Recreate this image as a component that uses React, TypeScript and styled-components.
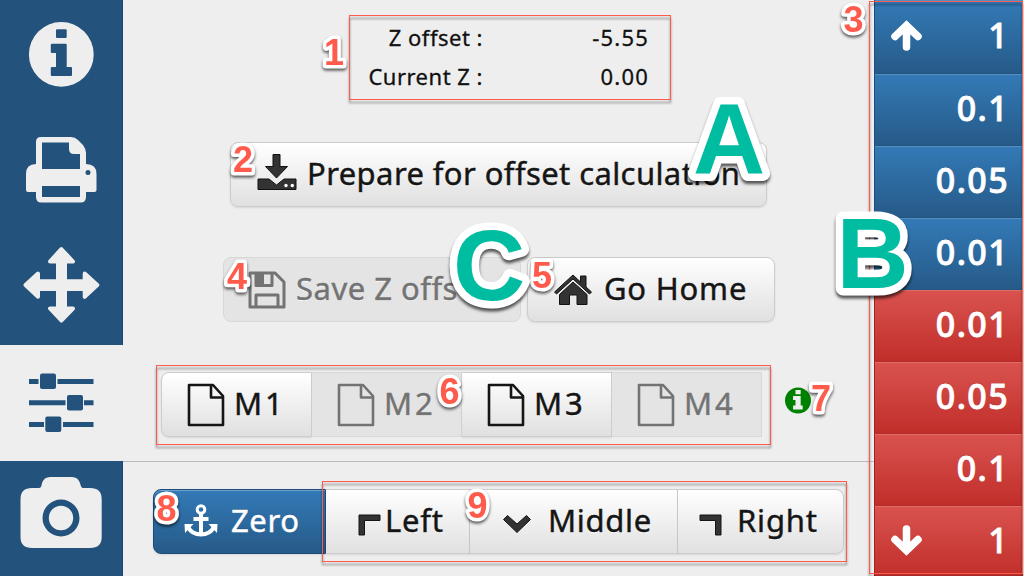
import React from 'react';
import styled, { createGlobalStyle, css } from 'styled-components';

const GlobalStyle = createGlobalStyle`
  * { box-sizing: border-box; }
  body { margin: 0; background: #eee; overflow: hidden; }
`;

const Screen = styled.div`
  position: relative;
  display: grid;
  grid-template-columns: 123px 751px 149px;
  width: 1024px;
  height: 576px;
  overflow: hidden;
  background: #eee;
  color: #111;
  font-family: 'Noto Sans', 'Open Sans', sans-serif;
`;

const Sidebar = styled.nav`
  display: grid;
  grid-template-rows: 115px 115px 115px 116px 115px;
`;

const SideItem = styled.div<{ $active?: boolean }>`
  background: ${p => (p.$active ? '#eee' : '#23527c')};
  color: ${p => (p.$active ? '#23527c' : '#eee')};
  border-right: 1px solid ${p => (p.$active ? '#eee' : '#174579')};
`;

const Icon = styled.svg<{ $shift?: number }>`
  display: block;
  flex: none;
  fill: currentColor;
  overflow: visible;
  margin-top: ${p => (p.$shift ?? 0) * 2}px;
`;

const Main = styled.main`
  display: flex;
  flex-direction: column;
`;

const Upper = styled.section`
  height: 462px;
  border-bottom: 1px solid #bbb;
  padding-top: 18px;
`;

const Readout = styled.dl`
  display: grid;
  grid-template-columns: 360px 166px;
  grid-auto-rows: 39px;
  margin: 0;
  line-height: 39px;
  font-size: 22px;
  text-align: right;
  -webkit-text-stroke: 0.3px currentColor;
`;

const Term = styled.dt<{ $spacing: number }>`
  letter-spacing: ${p => p.$spacing}px;
`;

const Value = styled.dd<{ $spacing: number }>`
  margin: 0;
  letter-spacing: ${p => p.$spacing}px;
`;

const ButtonRow = styled.div<{ $left: number; $top: number; $gap?: number }>`
  display: flex;
  gap: ${p => p.$gap ?? 0}px;
  margin: ${p => p.$top}px 0 0 ${p => p.$left}px;
`;

const Button = styled.button<{
  $width: number;
  $pad: number;
  $gap: number;
  $corners?: string;
  $joined?: boolean;
  $primary?: boolean;
}>`
  display: flex;
  align-items: center;
  gap: ${p => p.$gap}px;
  width: ${p => p.$width}px;
  height: 65px;
  padding: 0 0 0 ${p => p.$pad}px;
  border: 1px solid #ccc;
  border-left-width: ${p => (p.$joined ? 0 : 1)}px;
  border-radius: ${p => p.$corners ?? '8px'};
  background: linear-gradient(#fff, #e0e0e0);
  box-shadow: inset 0 1px 0 rgba(255, 255, 255, 0.3), 0 1px 2px rgba(0, 0, 0, 0.1);
  color: #151515;
  font: inherit;
  font-size: 31px;
  line-height: 61px;
  text-shadow: 0 1px 0 #fff;
  white-space: nowrap;
  ${p => p.$primary && css`
    background: linear-gradient(#337ab7, #265a88);
    border-color: #1c4c7c;
    color: #fff;
    text-shadow: 0 -1px 0 rgba(0, 0, 0, 0.2);
  `}
  &:disabled {
    background: #e4e4e4;
    border-color: #d8d8d8;
    box-shadow: none;
    color: #737373;
  }
`;

const Label = styled.span<{ $spacing: number }>`
  height: 63px;
  letter-spacing: ${p => p.$spacing}px;
  -webkit-text-stroke: 0.45px currentColor;
`;

const InfoMark = styled.span`
  margin: 15px 0 0 23px;
  color: #008000;
`;

const Steps = styled.aside`
  display: grid;
  grid-template-rows: 74px repeat(7, 72px);
`;

const Step = styled.button<{ $down?: boolean }>`
  display: flex;
  align-items: center;
  justify-content: space-between;
  padding: 0 14px 3px 16px;
  border: 0;
  border-left: 1px solid ${p => (p.$down ? '#a51f1c' : '#1c4c7c')};
  border-bottom: 1px solid ${p => (p.$down ? '#b92c28' : '#245580')};
  background: ${p => (p.$down ? 'linear-gradient(#d9534f, #c12e2a)' : 'linear-gradient(#337ab7, #265a88)')};
  box-shadow: inset 0 1px 0 rgba(255, 255, 255, 0.16);
  color: #fff;
  font: inherit;
  font-size: 34px;
  font-weight: 500;
  text-shadow: 0 -1px 0 rgba(0, 0, 0, 0.2);
`;

const StepText = styled.span`
  margin-left: auto;
  letter-spacing: 1.4px;
  -webkit-text-stroke: 0.8px currentColor;
`;

const Outline = styled.div<{ $x: number; $y: number; $w: number; $h: number }>`
  position: absolute;
  left: ${p => p.$x}px;
  top: ${p => p.$y}px;
  width: ${p => p.$w}px;
  height: ${p => p.$h}px;
  border: 1px solid #ff5b4c;
  filter: drop-shadow(0 3px 1px rgba(0, 0, 0, 0.5));
  pointer-events: none;
`;

const Callouts = styled.svg`
  position: absolute;
  inset: 0;
  pointer-events: none;
`;

const Callout = styled.text<{ $big?: boolean }>`
  fill: ${p => (p.$big ? '#00bca1' : '#ff5b4c')};
  font: bold ${p => (p.$big ? 100 : 36)}px/1 'Liberation Sans', sans-serif;
  stroke: #fff;
  stroke-width: ${p => (p.$big ? 15 : 7)}px;
  stroke-linejoin: round;
  paint-order: stroke fill;
  filter: drop-shadow(0 ${p => (p.$big ? 3 : 2.5)}px 1.5px rgba(0, 0, 0, 0.65));
`;

const InfoIcon = () => (
  <Icon width="122" height="115" viewBox="0 0 122 115">
    <path fillRule="evenodd" d="M61.3 22a32.4 32.4 0 1 0 0 64.8a32.4 32.4 0 0 0 0-64.8zM57 29.2h8.700a1 1 0 0 1 1 1V37a1 1 0 0 1-1 1H57a1 1 0 0 1-1-1v-6.800a1 1 0 0 1 1-1zM51.800 43.800h13.900a1 1 0 0 1 1 1V67h4.300a1 1 0 0 1 1 1v7a1 1 0 0 1-1 1H51.800a1 1 0 0 1-1-1v-7a1 1 0 0 1 1-1H56V53h-4.200a1 1 0 0 1-1-1v-7.200a1 1 0 0 1 1-1z" />
  </Icon>
);

const PrintIcon = () => (
  <Icon width="122" height="115" viewBox="0 115 122 115">
    <path fillRule="evenodd" d="M41 137H71Q75 137 78 140L83 145Q86 149 86 153V164Q96.500 164 96.500 174V190Q96.500 192 94.500 192H86V197Q86 202.500 80.500 202.500H41.500Q36 202.500 36 197V192H28Q26 192 26 190V174Q26 164 36 164V142Q36 137 41 137ZM42 142.500V169H80V154H74Q69 154 69 149V142.500ZM42 186V197H80V186ZM88 170a2.500 2.500 0 1 0 0 5a2.500 2.500 0 0 0 0-5z" />
  </Icon>
);

const MoveIcon = () => (
  <Icon width="122" height="115" viewBox="0 230 122 115">
    <path strokeLinejoin="round" stroke="currentColor" strokeWidth="4" d="M61.300 249L73 261.500H65V281.200H84.700V273.500L97.300 285L84.700 296.800V289H65V308.500H73L61.300 320.500L50 308.500H58V289H38V296.800L25.500 285L38 273.500V281.200H58V261.500H50Z" />
  </Icon>
);

const SlidersIcon = () => (
  <Icon width="122" height="115" viewBox="0 345 122 115">
    <path d="M29 379h9.500v5H29zM57.500 379h36v5h-36zM29 400.300h36.500v5H29zM84 400.300h9.500v5H84zM29 422h15v5H29zM63 422h30.500v5H63z" />
    <rect x="40" y="373.500" width="16" height="15.500" rx="2" />
    <rect x="67" y="395" width="16" height="15.500" rx="2" />
    <rect x="45.300" y="416.500" width="16" height="15.500" rx="2" />
  </Icon>
);

const CameraIcon = () => (
  <Icon width="122" height="115" viewBox="0 461 122 115">
    <path fillRule="evenodd" d="M32 488H39Q41.500 488 42 483Q44 477 50 477H72Q78 477 80 483Q81 488 83 488H90Q101.700 488 101.700 499V537Q101.700 548 90 548H32Q20.500 548 20.500 537V499Q20.500 488 32 488ZM61 499.500a18.500 18.500 0 1 0 0 37a18.500 18.500 0 0 0 0-37zM61 505.800a12.200 12.200 0 1 1 0 24.400a12.200 12.200 0 0 1 0-24.400z" />
  </Icon>
);

const DownloadIcon = () => (
  <Icon width="40" height="38" viewBox="0 0 40 38" color="#333" $shift={-3}>
    <path stroke="#111" strokeLinejoin="round" d="M16 1.500H23V13.500H30.500L19.500 25L8.500 13.500H16ZM1 26H12L19.500 32L27 26H39V36.500H1Z" />
    <circle cx="29" cy="32.500" r="1.700" fill="#fff" />
    <circle cx="35.300" cy="32.500" r="1.700" fill="#fff" />
  </Icon>
);

const FloppyIcon = () => (
  <Icon width="38" height="38" viewBox="0 0 38 38">
    <g fill="none" stroke="currentColor" strokeWidth="3" strokeLinejoin="round">
      <path d="M2 2H27L36 11V36H2Z" />
      <path d="M8 2V14.500H24V2M8 36V24H30V36" />
    </g>
    <path d="M8 2H16V14H8Z" />
  </Icon>
);

const HomeIcon = () => (
  <Icon width="38" height="32" viewBox="0 0 38 32" color="#333">
    <path stroke="#111" strokeWidth="1" d="M19 1L26.500 8V2H32V13L37.500 18L35.500 20L19 5L2.500 20L.5 18ZM19 8L33 20.500V30.500H23V21H15.500V30.500H5.500V20.500Z" />
  </Icon>
);

const FileIcon = () => (
  <Icon width="38" height="44" viewBox="0 0 38 44">
    <path fill="none" stroke="currentColor" strokeWidth="2.600" strokeLinejoin="round" d="M2 2H26L36 13V42H2ZM24 2V14.500H36" />
  </Icon>
);

const SmallInfoIcon = () => (
  <Icon width="26" height="27" viewBox="28.900 22 64.800 64.800">
    <path fillRule="evenodd" d="M61.300 22a32.400 32.400 0 1 0 0 64.800a32.400 32.400 0 0 0 0-64.800zM55 28h13v11H55zM49 43h19v24h5v10H49v-10h6V53h-6z" />
  </Icon>
);

const AnchorIcon = () => (
  <Icon width="34" height="34" viewBox="0 0 34 34" $shift={-1}>
    <circle cx="17" cy="5.500" r="3.800" fill="none" stroke="currentColor" strokeWidth="3" />
    <path d="M15 9h4v22h-4zM9.500 13h15v4h-15z" />
    <path fill="none" stroke="currentColor" strokeWidth="4" d="M4 23Q8 30.500 17 30.500Q26 30.500 30 23" />
    <path d="M.5 20H9.500L1 29ZM33.500 20H24.500L33 29Z" />
  </Icon>
);

const CornerIcon = ({ flip }: { flip?: boolean }) => (
  <Icon width="23" height="22" viewBox="0 0 23 22" color="#333" $shift={3}>
    <path stroke="#151515" d={flip ? 'M1 1H22V21H16.500V6.500H1Z' : 'M22 1H1V21H6.500V6.500H22Z'} />
  </Icon>
);

const ChevronIcon = () => (
  <Icon width="30" height="20" viewBox="0 0 30 20" color="#333" $shift={2}>
    <path stroke="#151515" strokeLinejoin="round" d="M5.500 1.500L15 10L24.500 1.500L28.500 5.500L15 18.500L1.500 5.500Z" />
  </Icon>
);

const ArrowIcon = ({ down }: { down?: boolean }) => (
  <Icon width="31" height="31" viewBox="0 0 31 31">
    <path
      transform={down ? 'rotate(180 15.5 15.5)' : undefined}
      fill="none"
      stroke="currentColor"
      strokeWidth="7.5"
      strokeLinecap="round"
      strokeLinejoin="miter"
      d="M15.500 27V6M4 16.500L15.500 5.500L27 16.500"
    />
  </Icon>
);

const memory = [
  { name: 'M1', enabled: true },
  { name: 'M2', enabled: false },
  { name: 'M3', enabled: true },
  { name: 'M4', enabled: false },
];

const steps = ['1', '0.1', '0.05', '0.01', '0.01', '0.05', '0.1', '1'];

const outlines = [
  [349, 15, 322, 85],
  [869, 1, 154, 573],
  [156, 365, 615, 80],
  [322, 481, 525, 81],
];

const callouts: [string, number, number][] = [
  ['1', 324, 65],
  ['2', 233, 172],
  ['3', 843.5, 32],
  ['4', 227, 288.5],
  ['5', 532, 287.5],
  ['6', 439.5, 404],
  ['7', 811, 411],
  ['8', 156.5, 521],
  ['9', 467.5, 518],
];

const letters: [string, number, number][] = [
  ['A', 693, 174],
  ['B', 836.5, 288],
  ['C', 453, 300],
];

export default function App() {
  return (
    <Screen>
      <GlobalStyle />
      <Sidebar>
        <SideItem><InfoIcon /></SideItem>
        <SideItem><PrintIcon /></SideItem>
        <SideItem><MoveIcon /></SideItem>
        <SideItem $active><SlidersIcon /></SideItem>
        <SideItem><CameraIcon /></SideItem>
      </Sidebar>
      <Main>
        <Upper>
          <Readout>
            <Term $spacing={0.5}>Z offset :</Term>
            <Value $spacing={1.2}>-5.55</Value>
            <Term $spacing={0.5}>Current Z :</Term>
            <Value $spacing={1.2}>0.00</Value>
          </Readout>
          <ButtonRow $left={107} $top={46}>
            <Button $width={537} $pad={26} $gap={10}>
              <DownloadIcon />
              <Label $spacing={0.4}>Prepare for offset calculation</Label>
            </Button>
          </ButtonRow>
          <ButtonRow $left={100} $top={50} $gap={6}>
            <Button $width={298} $pad={24} $gap={10} disabled>
              <FloppyIcon />
              <Label $spacing={0.5}>Save Z offset</Label>
            </Button>
            <Button $width={248} $pad={26} $gap={12}>
              <HomeIcon />
              <Label $spacing={0.8}>Go Home</Label>
            </Button>
          </ButtonRow>
          <ButtonRow $left={38} $top={50}>
            {memory.map((m, i) => (
              <Button
                key={m.name}
                $width={i ? 150 : 151}
                $pad={25}
                $gap={9}
                $corners={i ? '0' : '8px 0 0 8px'}
                $joined={i > 0}
                disabled={!m.enabled}
              >
                <FileIcon />
                <Label $spacing={3}>{m.name}</Label>
              </Button>
            ))}
            <InfoMark><SmallInfoIcon /></InfoMark>
          </ButtonRow>
        </Upper>
        <ButtonRow $left={30} $top={27}>
          <Button $width={173} $pad={30} $gap={13} $corners="8px 0 0 8px" $primary>
            <AnchorIcon />
            <Label $spacing={0.6}>Zero</Label>
          </Button>
          <Button $width={144} $pad={32} $gap={4} $corners="0" $joined>
            <CornerIcon />
            <Label $spacing={0.8}>Left</Label>
          </Button>
          <Button $width={208} $pad={32} $gap={16} $corners="0" $joined>
            <ChevronIcon />
            <Label $spacing={0.7}>Middle</Label>
          </Button>
          <Button $width={166} $pad={21} $gap={15} $corners="0 8px 8px 0" $joined>
            <CornerIcon flip />
            <Label $spacing={0.8}>Right</Label>
          </Button>
        </ButtonRow>
      </Main>
      <Steps>
        {steps.map((s, i) => (
          <Step key={i} $down={i > 3}>
            {(i === 0 || i === 7) && <ArrowIcon down={i === 7} />}
            <StepText>{s}</StepText>
          </Step>
        ))}
      </Steps>
      {outlines.map(([x, y, w, h]) => (
        <Outline key={x} $x={x} $y={y} $w={w} $h={h} />
      ))}
      <Callouts width="1024" height="576">
        {callouts.map(([text, x, base]) => (
          <Callout key={text} x={x} y={base}>{text}</Callout>
        ))}
        {letters.map(([text, x, base]) => (
          <Callout key={text} x={x} y={base} $big>{text}</Callout>
        ))}
      </Callouts>
    </Screen>
  );
}
